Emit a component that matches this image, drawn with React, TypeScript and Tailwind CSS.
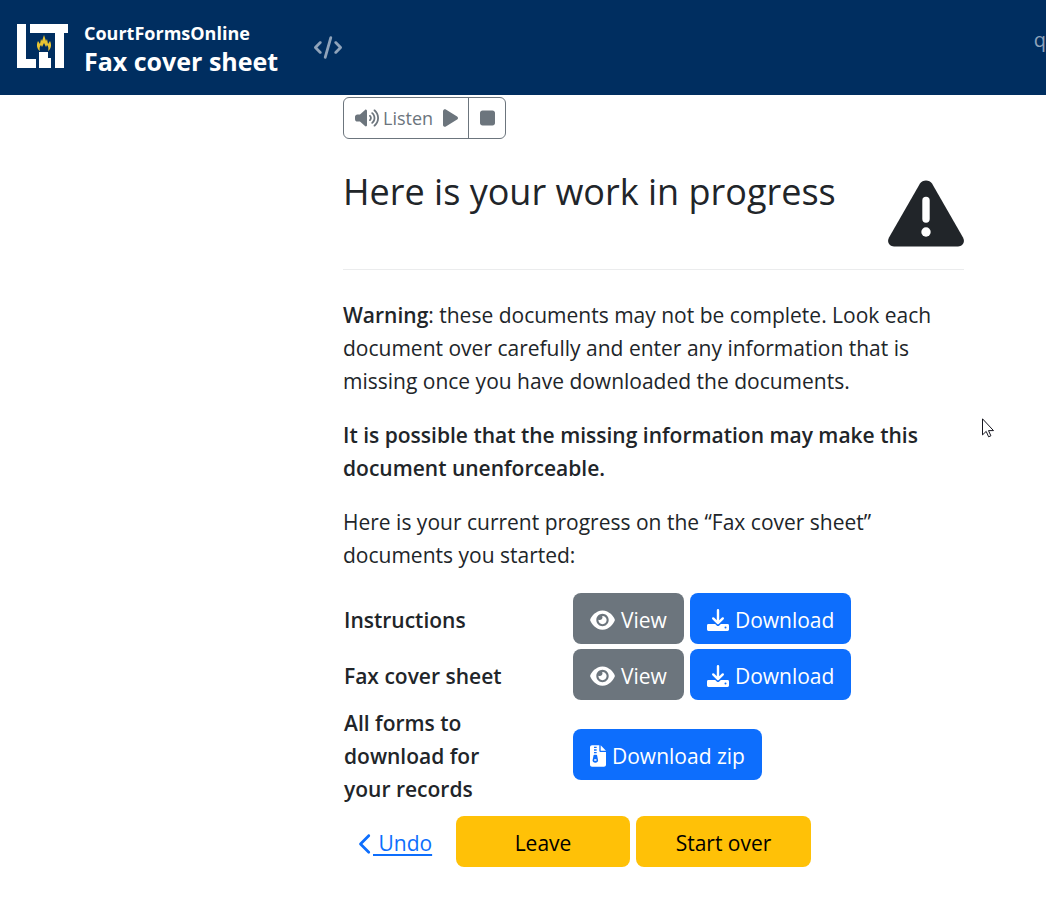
import type { ReactNode } from "react";
import { FaChevronLeft, FaCode, FaPlay, FaStop, FaVolumeHigh } from "react-icons/fa6";

const buttonBase =
  "inline-flex h-[51px] items-center gap-1.5 rounded-lg px-[17px] pt-1 whitespace-nowrap";

function Logo() {
  return (
    <svg viewBox="0 0 51 44" className="mb-[3px] h-11 w-[51px] shrink-0" role="img" aria-label="LIT Lab">
      <path fill="#fff" d="M0 0h9v35h10v9H0zM13 0h38v9h-4v35h-9V9H13zM22 28h9v6h3v10H22z" />
      <path
        fill="#e9c532"
        d="M23 27c-3-2-4-6-2-10l2 3 1-5 1 2 2-6 2 6 1-2 1 5 2-3c2 4 1 8-2 10 1-3 0-5-1-6l-1 2-2-4-2 4-1-2c-1 1-2 3-1 6z"
      />
    </svg>
  );
}

function EyeIcon() {
  return (
    <svg viewBox="0 0 576 512" className="h-[22px] w-[25px]" fill="currentColor" aria-hidden="true">
      <path d="M279.6 160.4C282.4 160.1 285.2 160 288 160C341 160 384 202.1 384 256C384 309 341 352 288 352C234.1 352 192 309 192 256C192 253.2 192.1 250.4 192.4 247.6C201.7 252.1 212.5 256 224 256C259.3 256 288 227.3 288 192C288 180.5 284.1 169.7 279.6 160.4zM480.6 112.6C527.4 156 558.7 207.1 573.5 243.7C576.8 251.6 576.8 260.4 573.5 268.3C558.7 304 527.4 355.1 480.6 399.4C433.5 443.2 368.8 480 288 480C207.2 480 142.5 443.2 95.4 399.4C48.6 355.1 17.3 304 2.5 268.3C-.8 260.4-.8 251.6 2.5 243.7C17.3 207.1 48.6 156 95.4 112.6C142.5 68.8 207.2 32 288 32C368.8 32 433.5 68.8 480.6 112.6zM288 112C208.5 112 144 176.5 144 256C144 335.5 208.5 400 288 400C367.5 400 432 335.5 432 256C432 176.5 367.5 112 288 112z" />
    </svg>
  );
}

function DownloadIcon() {
  return (
    <svg viewBox="0 0 22 22" className="size-[22px]" aria-hidden="true">
      <path
        fill="currentColor"
        fillRule="evenodd"
        d="M1.4 15h6.8l1.5 1.5a1.9 1.9 0 0 0 2.6 0l1.5-1.5h6.8q1.4 0 1.400 1.400v4.200q0 1.400-1.400 1.400H1.400Q0 22 0 20.600v-4.200q0-1.400 1.400-1.400zM18.500 17.500a1 1 0 1 0 0 2 1 1 0 0 0 0-2z"
      />
      <path
        d="M11 1.200v12.800M6.200 9.400l4.800 4.800 4.800-4.800"
        fill="none"
        stroke="currentColor"
        strokeWidth="2.400"
        strokeLinecap="round"
        strokeLinejoin="round"
      />
    </svg>
  );
}

function ZipIcon() {
  return (
    <svg viewBox="0 0 384 512" className="h-[22px] w-4" fill="currentColor" aria-hidden="true">
      <path
        fillRule="evenodd"
        d="M256 0v128h128zM224 128V0H48C21.500 0 0 21.500 0 48v416c0 26.500 21.500 48 48 48h288c26.500 0 48-21.500 48-48V160H256c-17.700 0-32-14.300-32-32zM96 32h64v32H96zM96 96h64v32H96zM96 160h64v32H96zM63 354l23-115q3-15 18-15h48q15 0 18 15l23 115c7 32-18 62-65 62s-72-30-65-62zM112 336a16 16 0 0 0 0 32h32a16 16 0 0 0 0-32z"
      />
    </svg>
  );
}

function WarningIcon() {
  return (
    <svg viewBox="0 0 76 67" className="mt-[11px] h-[67px] w-[76px] shrink-0" role="img" aria-label="Warning">
      <path
        fill="currentColor"
        d="M32 3.500C34.500-.5 41.500-.5 44 3.500L75 57.500C77.500 62 74.500 66.500 70 66.500H6C1.500 66.500-1.500 62 1 57.500z"
      />
      <path d="M38 20.500v18.500" stroke="#fff" strokeWidth="7.400" strokeLinecap="round" />
      <circle cx="38" cy="52" r="4.700" fill="#fff" />
    </svg>
  );
}

function DownloadButton() {
  return (
    <a href="#download" className={`${buttonBase} bg-[#0d6efd] text-white`}>
      <DownloadIcon />
      Download
    </a>
  );
}

function ViewButton() {
  return (
    <a href="#view" className={`${buttonBase} bg-[#6c757d] text-white`}>
      <EyeIcon />
      View
    </a>
  );
}

function DocumentRow({ title, children }: { title: string; children: ReactNode }) {
  return (
    <tr>
      <th scope="row" className="w-[230px] pt-[5px] pr-16 pl-px text-left align-middle font-[650]">
        {title}
      </th>
      <td className="py-[2px] align-middle">
        <div className="flex h-[52px] items-center gap-1.5">{children}</div>
      </td>
    </tr>
  );
}

export default function App() {
  return (
    <div className="min-h-screen overflow-hidden bg-white font-['Open_Sans','Noto_Sans',sans-serif] text-[21px] leading-[33px] text-[#212529]">
      <header className="flex h-[95px] items-center bg-[#002e60] pl-[17px] text-white">
        <Logo />
        <div className="ml-4 pt-[3px] font-bold">
          <div className="text-[18px] leading-6">CourtFormsOnline</div>
          <div className="text-[25px] leading-8">Fax cover sheet</div>
        </div>
        <button type="button" aria-label="Source code" className="ml-9 text-[#8fa3ba]">
          <FaCode className="h-[23px] w-7" />
        </button>
        <a href="#account" className="mb-4 ml-auto text-[20px] text-[#8fa3ba]">
          q
        </a>
      </header>

      <main className="pt-[2px] pr-[82px] pb-8 pl-[343px]">
        <div className="inline-flex h-[42px] items-stretch rounded-md border border-[#6c757d] text-[18px] text-[#6c757d]">
          <button type="button" className="flex items-center gap-1 pr-2.5 pl-[11px]">
            <FaVolumeHigh className="h-5 w-6" />
            Listen
            <FaPlay className="ml-1.5 h-5 w-[15px]" />
          </button>
          <button
            type="button"
            aria-label="Stop"
            className="border-l border-[#6c757d] pr-2.5 pl-[11px]"
          >
            <FaStop className="h-5 w-[15px]" />
          </button>
        </div>

        <div className="flex h-[131px] items-start justify-between border-b border-[#ebeced] pt-[30px]">
          <h1 className="text-[36px] leading-[46px]">Here is your work in progress</h1>
          <WarningIcon />
        </div>

        <p className="mt-[29px]">
          <strong className="font-[650]">Warning</strong>: these documents may not be complete. Look
          each document over carefully and enter any information that is missing once you have
          downloaded the documents.
        </p>
        <p className="mt-[21px] font-[650]">
          It is possible that the missing information may make this document unenforceable.
        </p>
        <p className="mt-[21px]">
          Here is your current progress on the “Fax cover sheet” documents you started:
        </p>

        <table className="mt-[18px] w-full border-collapse">
          <tbody>
            <DocumentRow title="Instructions">
              <ViewButton />
              <DownloadButton />
            </DocumentRow>
            <DocumentRow title="Fax cover sheet">
              <ViewButton />
              <DownloadButton />
            </DocumentRow>
            <DocumentRow title="All forms to download for your records">
              <a href="#zip" className={`${buttonBase} bg-[#0d6efd] text-white`}>
                <ZipIcon />
                Download zip
              </a>
            </DocumentRow>
          </tbody>
        </table>

        <div className="mt-2.5 flex items-center gap-1.5 text-black">
          <a href="#undo" className="flex w-[107px] items-center pt-1 pl-4 text-[#0d6efd]">
            <FaChevronLeft className="h-[22px] w-[14px]" />
            <span className="whitespace-pre underline underline-offset-3"> Undo</span>
          </a>
          <button type="button" className="h-[51px] w-[174px] rounded-lg bg-[#ffc107] pt-1">
            Leave
          </button>
          <button type="button" className="h-[51px] w-[175px] rounded-lg bg-[#ffc107] pt-1">
            Start over
          </button>
        </div>
      </main>

      <svg
        viewBox="0 0 12 20"
        className="pointer-events-none absolute top-[418px] left-[982px] h-5 w-3"
        aria-hidden="true"
      >
        <path
          d="M.5.8v16.1l3.7-3.5 2.4 5.4 2.3-1-2.4-5.2h5z"
          fill="#fff"
          stroke="#15151f"
          strokeWidth="1"
        />
      </svg>
    </div>
  );
}
